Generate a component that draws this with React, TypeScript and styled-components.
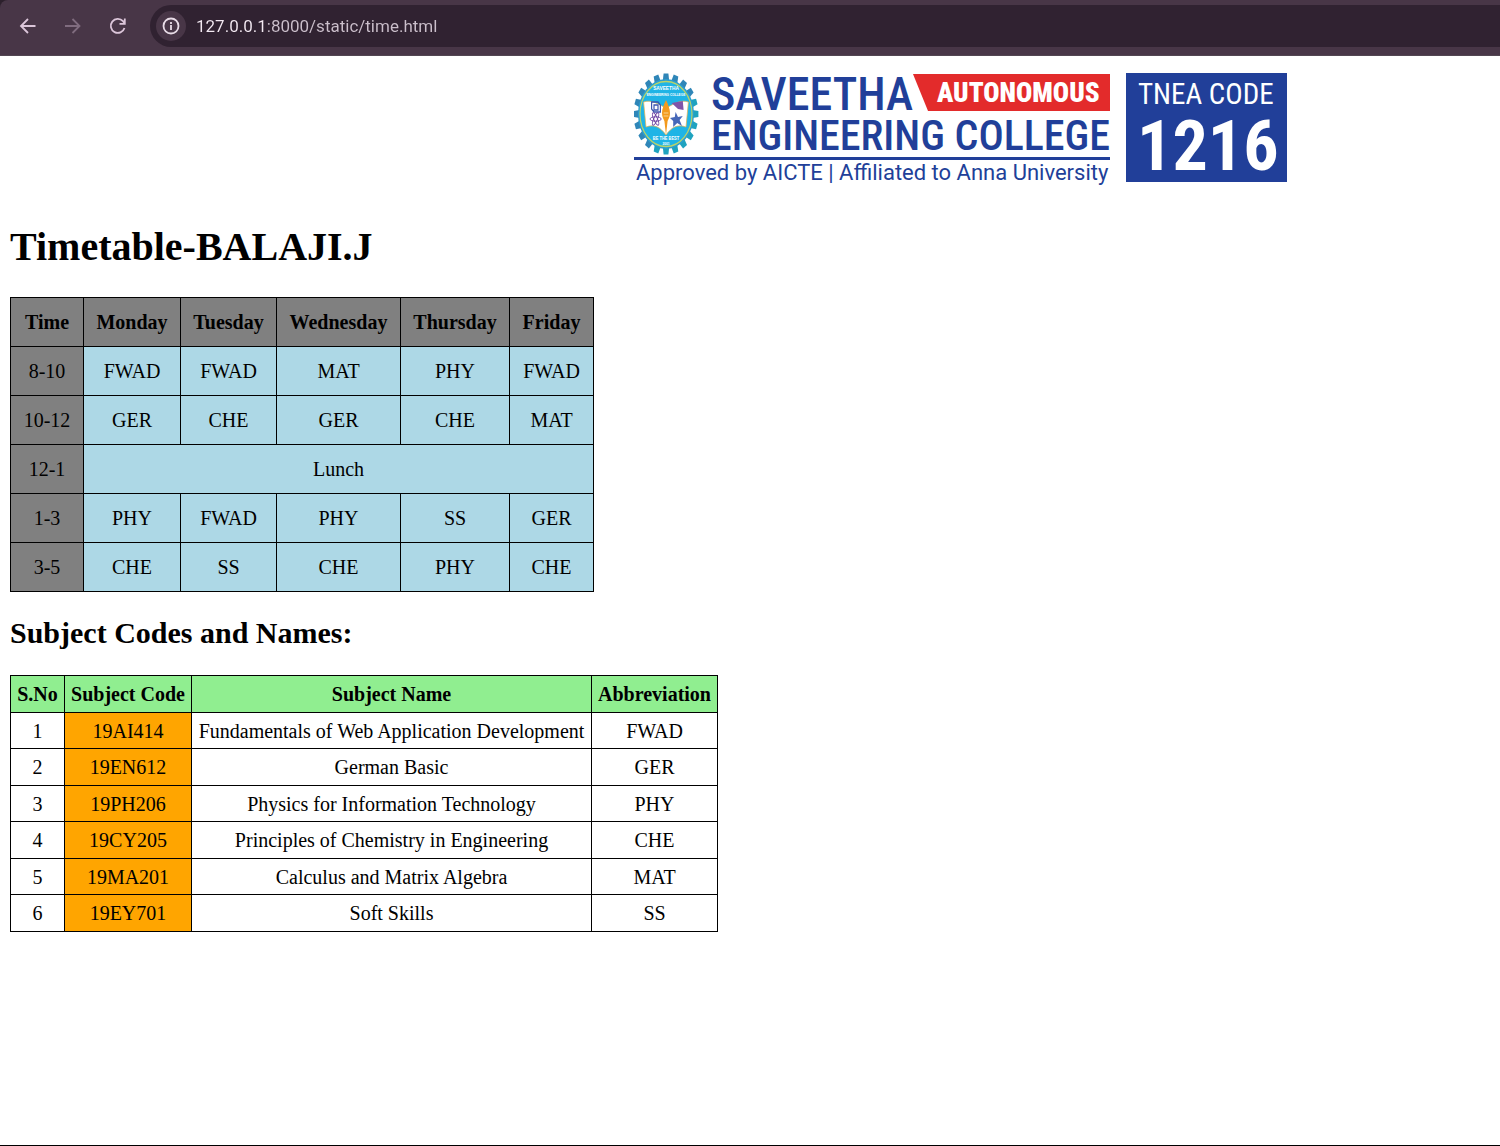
import React from "react";
import styled, { createGlobalStyle } from "styled-components";

const Global = createGlobalStyle`
  * { box-sizing: border-box; }
  body { margin: 0; background: #fff; color: #000; font: 20px/24px "Liberation Serif", "Times New Roman", serif; }
`;

const Page = styled.div`
  display: flex;
  flex-direction: column;
  min-height: 100vh;
  border-bottom: 1px solid #000;
`;

const Toolbar = styled.header`
  display: flex;
  align-items: center;
  height: 56px;
  padding: 5px 0 8px 5px;
  border-bottom: 1px solid #524652;
  border-top-left-radius: 8px;
  background: #483647;
`;

const Chrome = styled.div`
  background: #2c202c;
`;

const NavButton = styled.button`
  display: flex;
  align-items: center;
  justify-content: center;
  width: 45px;
  height: 42px;
  padding: 0;
  border: 0;
  background: none;
  color: #dcc6da;
  &:disabled { color: #806c7f; }
`;

const AddressBar = styled.form`
  flex: 1;
  display: flex;
  align-items: center;
  gap: 10px;
  height: 42px;
  margin-left: 10px;
  padding-left: 6px;
  border-radius: 21px 0 0 21px;
  background: #302231;
`;

const InfoButton = styled.button`
  display: flex;
  align-items: center;
  justify-content: center;
  width: 30px;
  height: 30px;
  padding: 0;
  border: 0;
  border-radius: 50%;
  background: #483647;
  color: #e8dce7;
`;

const Address = styled.input`
  flex: 1;
  min-width: 0;
  padding: 0;
  border: 0;
  outline: 0;
  background: linear-gradient(90deg, #f4eaf3 71px, #cbbfcb 71px);
  background-clip: text;
  color: transparent;
  font: 17px/24px Roboto, "Noto Sans", sans-serif;
`;

const Content = styled.main`
  flex: 1;
  padding: 17px 10px 10px;
`;

const Banner = styled.div`
  display: flex;
  justify-content: flex-end;
  padding-right: 203px;
  svg { display: block; }
`;

const Title = styled.h1`
  margin: 36px 0 26px;
  font-size: 40px;
  line-height: 48px;
`;

const Subtitle = styled.h2`
  margin: 23px 0 24px;
  font-size: 30px;
  line-height: 36px;
`;

const Grid = styled.table<{ $pad: number; $row: number; $altRow: number }>`
  border-collapse: collapse;
  text-align: center;
  thead tr, tbody tr:nth-child(even) { height: ${(p) => p.$altRow}px; }
  tbody tr:nth-child(odd) { height: ${(p) => p.$row}px; }
  th, td {
    padding: 0 ${(p) => p.$pad}px;
    border: 1px solid #000;
    white-space: nowrap;
  }
`;

const Column = styled.col<{ $width: number }>`
  width: ${(p) => p.$width}px;
`;

const Cell = styled.td<{ $fill?: string }>`
  background: ${(p) => p.$fill || "transparent"};
`;

const Head = styled.th<{ $fill: string; $plain?: boolean }>`
  background: ${(p) => p.$fill};
  font-weight: ${(p) => (p.$plain ? 400 : 700)};
`;

const dayWidths = [73, 97, 96, 124, 109, 84];
const subjectWidths = [54, 127, 400, 126];
const days = ["Time", "Monday", "Tuesday", "Wednesday", "Thursday", "Friday"];
const slots: [string, string[]][] = [
  ["8-10", ["FWAD", "FWAD", "MAT", "PHY", "FWAD"]],
  ["10-12", ["GER", "CHE", "GER", "CHE", "MAT"]],
  ["12-1", ["Lunch"]],
  ["1-3", ["PHY", "FWAD", "PHY", "SS", "GER"]],
  ["3-5", ["CHE", "SS", "CHE", "PHY", "CHE"]],
];
const subjects = [
  ["19AI414", "Fundamentals of Web Application Development", "FWAD"],
  ["19EN612", "German Basic", "GER"],
  ["19PH206", "Physics for Information Technology", "PHY"],
  ["19CY205", "Principles of Chemistry in Engineering", "CHE"],
  ["19MA201", "Calculus and Matrix Algebra", "MAT"],
  ["19EY701", "Soft Skills", "SS"],
];

const BLUE = "#213f99";
const teeth = Array.from({ length: 20 }, (_, i) => i * 18);

function Emblem() {
  return (
    <g transform="translate(32 41) scale(0.8 1)">
      {teeth.map((a) => (
        <path key={a} d="M-4-33-3-40.500H3L4-33Z" fill={a > 60 && a < 200 ? "#1fa3bf" : "#2f86b8"} transform={`rotate(${a})`} />
      ))}
      <circle r="35" fill="#2b9fd0" />
      <circle r="32.500" fill="#1fb4e6" stroke="#b9d36a" strokeWidth="1.500" />
      <path d="M0-6C-8-9-18-15-28-12L-25 13C-15 10-7 13 0 21C7 13 15 10 25 13L28-12C18-15 8-9 0-6Z" fill="#fff" stroke="#e9b44c" strokeWidth=".8" />
      <path d="M0-14C3-9 5-5 5-1 5 3 3 5 2 7L0 21-2 7C-3 5-5 3-5-1-5-5-3-9 0-14Z" fill="#f39a1e" />
      <path d="M-3-1H3M-3 2H3" stroke="#fbd9a0" />
      <path d="M-18-12l8 0 3 3v7l-8 0-3-3zM-15-9h5v5h-5z" fill="none" stroke="#3c56b0" strokeWidth="1.500" />
      <path d="M7-11l14-2 1 9-7-1z" fill="#8055a8" />
      <g fill="none" stroke="#6b3fa0" strokeWidth="1">
        <ellipse cx="-13" cy="5" rx="7" ry="2.200" />
        <ellipse cx="-13" cy="5" rx="7" ry="2.200" transform="rotate(60 -13 5)" />
        <ellipse cx="-13" cy="5" rx="7" ry="2.200" transform="rotate(120 -13 5)" />
      </g>
      <path d="M12-2l3 5 6-1-4 4 3 6-6-3-5 4 0-6-4-3 6-1z" fill="#4668b8" />
      <g fill="#fff" fontFamily="Liberation Sans, sans-serif" fontWeight="700" textAnchor="middle">
        <text y="-24" fontSize="6">SAVEETHA</text>
        <text y="-18" fontSize="4">ENGINEERING COLLEGE</text>
        <text y="26" fontSize="5">BE THE BEST</text>
        <text y="31" fontSize="4">2001</text>
      </g>
    </g>
  );
}

function Logo() {
  const narrow = '"Roboto Condensed", "Liberation Sans Narrow", sans-serif';
  return (
    <svg width="653" height="114" viewBox="0 0 653 114" role="img" aria-label="Saveetha Engineering College">
      <Emblem />
      <g fill={BLUE}>
        <text x="77" y="37" fontSize="46" fontWeight="500" fontFamily={narrow}>SAVEETHA</text>
        <text x="77" y="77" fontSize="42" fontWeight="500" fontFamily={narrow}>ENGINEERING COLLEGE</text>
        <rect y="84" width="476" height="3" />
        <text x="2" y="107" fontSize="22" fontFamily="Roboto, sans-serif">Approved by AICTE | Affiliated to Anna University</text>
        <rect x="492" width="161" height="109" />
      </g>
      <path d="M279 1H476V38H294Z" fill="#e32b2b" />
      <g fill="#fff">
        <text x="303" y="29" fontSize="27" fontWeight="900" fontFamily={narrow}>AUTONOMOUS</text>
        <text x="504" y="31" fontSize="29" fontFamily={narrow}>TNEA CODE</text>
        <text x="503" y="97" fontSize="70" fontWeight="700" fontFamily={narrow}>1216</text>
      </g>
    </svg>
  );
}

const Icon = ({ children }: { children: React.ReactNode }) => (
  <svg width="18" height="18" viewBox="0 0 18 18" fill="none" stroke="currentColor" strokeWidth="1.800" aria-hidden="true">
    {children}
  </svg>
);

export default function App() {
  return (
    <Page>
      <Global />
      <Chrome>
        <Toolbar>
          <NavButton aria-label="Back"><Icon><path d="M16.500 9H2.500M9 2 2 9l7 7" /></Icon></NavButton>
          <NavButton aria-label="Forward" disabled><Icon><path d="M1 9h14M8.500 2l7 7-7 7" /></Icon></NavButton>
          <NavButton aria-label="Reload">
            <Icon><path d="M15.500 11A7 7 0 1 1 14 4.200L15.800 6.500M15.800 1.500V6.800H10.500" /></Icon>
          </NavButton>
          <AddressBar onSubmit={(e) => e.preventDefault()}>
            <InfoButton type="button" aria-label="Site information">
              <Icon><circle cx="9" cy="9" r="7.500" /><path d="M9 8v5M9 5v2" /></Icon>
            </InfoButton>
            <Address aria-label="Address" defaultValue="127.0.0.1:8000/static/time.html" />
          </AddressBar>
        </Toolbar>
      </Chrome>
      <Content>
        <Banner><Logo /></Banner>
        <Title>Timetable-BALAJI.J</Title>
        <Grid $pad={12} $row={49} $altRow={49}>
          <colgroup>{dayWidths.map((w, i) => <Column key={i} $width={w} />)}</colgroup>
          <thead>
            <tr>{days.map((d) => <Head key={d} scope="col" $fill="#808080">{d}</Head>)}</tr>
          </thead>
          <tbody>
            {slots.map(([time, items]) => (
              <tr key={time}>
                <Head scope="row" $fill="#808080" $plain>{time}</Head>
                {items.map((s, i) => (
                  <Cell key={i} $fill="#add8e6" colSpan={items.length === 1 ? 5 : 1}>{s}</Cell>
                ))}
              </tr>
            ))}
          </tbody>
        </Grid>
        <Subtitle>Subject Codes and Names:</Subtitle>
        <Grid $pad={6} $row={36} $altRow={37}>
          <colgroup>{subjectWidths.map((w, i) => <Column key={i} $width={w} />)}</colgroup>
          <thead>
            <tr>
              {["S.No", "Subject Code", "Subject Name", "Abbreviation"].map((h) => (
                <Head key={h} scope="col" $fill="#90ee90">{h}</Head>
              ))}
            </tr>
          </thead>
          <tbody>
            {subjects.map(([code, name, short], i) => (
              <tr key={code}>
                <Cell>{i + 1}</Cell>
                <Cell $fill="#ffa500">{code}</Cell>
                <Cell>{name}</Cell>
                <Cell>{short}</Cell>
              </tr>
            ))}
          </tbody>
        </Grid>
      </Content>
    </Page>
  );
}
